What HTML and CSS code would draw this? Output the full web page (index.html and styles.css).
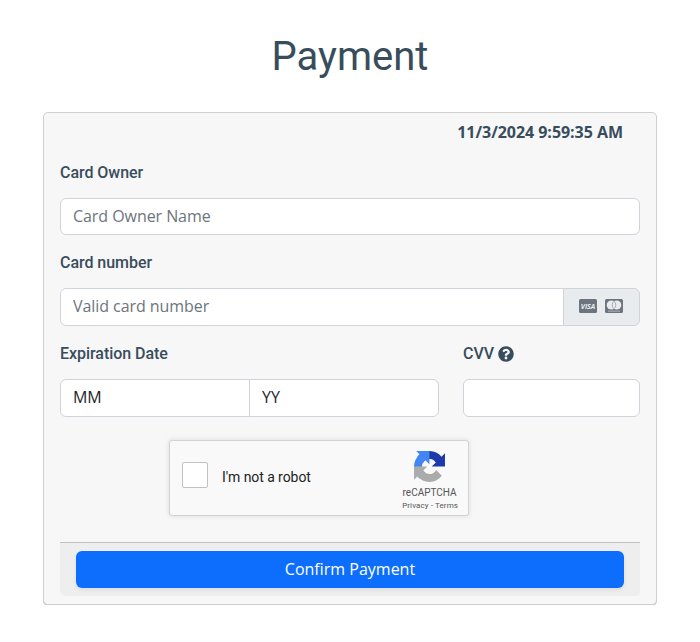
FILE: index.html
```html
<!DOCTYPE html>
<html lang="en">
<head>
<meta charset="utf-8">
<title>Payment</title>
<link rel="stylesheet" href="styles.css">
</head>
<body>
<main class="page">
  <h1 class="title">Payment</h1>
  <form class="card">
    <div class="timestamp">11/3/2024 9:59:35 AM</div>
    <div class="field owner">
      <label class="label" for="owner">Card Owner</label>
      <input class="control" id="owner" type="text" placeholder="Card Owner Name">
    </div>
    <div class="field">
      <label class="label" for="number">Card number</label>
      <div class="group">
        <input class="control" id="number" type="text" placeholder="Valid card number">
        <span class="addon">
          <svg class="brand" viewBox="0 0 18 14"><rect width="18" height="14" rx="1.5" fill="#6c757d"/><text x="9" y="9.7" text-anchor="middle" class="visa">VISA</text></svg>
          <svg class="brand" viewBox="0 0 18 14"><rect width="18" height="14" rx="1.5" fill="#6c757d"/><circle cx="6.3" cy="6" r="4.6" fill="#e9ecef"/><circle cx="11.7" cy="6" r="4.6" fill="#e9ecef"/><path d="M9 2.3a4.6 4.6 0 0 1 0 7.4a4.6 4.6 0 0 1 0-7.4z" fill="#e9ecef" stroke="#6c757d" stroke-width=".5"/><path d="M3 12.2h12" stroke="#b5babf" stroke-width=".9"/></svg>
        </span>
      </div>
    </div>
    <div class="row">
      <div class="field expiry">
        <label class="label" for="month">Expiration Date</label>
        <div class="group">
          <input class="control" id="month" type="text" value="MM">
          <input class="control" type="text" value="YY" aria-label="Year">
        </div>
      </div>
      <div class="field cvv">
        <label class="label" for="cvv">CVV
          <svg class="help" viewBox="0 0 512 512"><path fill="currentColor" d="M504 256c0 136.997-111.043 248-248 248S8 392.997 8 256C8 119.083 119.043 8 256 8s248 111.083 248 248zM262.655 90c-54.497 0-89.255 22.957-116.549 63.758-3.536 5.286-2.353 12.415 2.715 16.258l34.699 26.31c5.205 3.947 12.621 3.008 16.665-2.122 17.864-22.658 30.113-35.797 57.303-35.797 20.429 0 45.698 13.148 45.698 32.958 0 14.976-12.363 22.667-32.534 33.976C247.128 238.528 216 254.941 216 296v4c0 6.627 5.373 12 12 12h56c6.627 0 12-5.373 12-12v-1.333c0-28.462 83.186-29.647 83.186-106.667 0-58.002-60.165-102-116.531-102zM256 338c-25.365 0-46 20.635-46 46 0 25.364 20.635 46 46 46s46-20.636 46-46c0-25.364-20.635-46-46-46z"/></svg>
        </label>
        <input class="control" id="cvv" type="text">
      </div>
    </div>
    <div class="captcha">
      <span class="check"></span>
      <span class="robot">I'm not a robot</span>
      <div class="captcha-brand">
        <svg class="captcha-logo" viewBox="0 0 64 64"><path d="M64 31.955l-.033-1.37V4.687l-7.16 7.16C50.948 4.674 42.033.093 32.05.093c-10.4 0-19.622 4.96-25.458 12.64l11.736 11.86a15.55 15.55 0 0 1 4.754-5.334c2.05-1.6 4.952-2.906 8.968-2.906.485 0 .86.057 1.135.163 4.976.393 9.288 3.14 11.828 7.124l-8.307 8.307L64 31.953" fill="#1c3aa9"/><path d="M31.862.094l-1.37.033H4.594l7.16 7.16C4.58 13.147 0 22.06 0 32.046c0 10.4 4.96 19.622 12.64 25.458L24.5 45.768a15.55 15.55 0 0 1-5.334-4.754c-1.6-2.05-2.906-4.952-2.906-8.968 0-.485.057-.86.163-1.135.393-4.976 3.14-9.288 7.124-11.828l8.307 8.307L31.86.095" fill="#4285f4"/><path d="M.001 32.045l.033 1.37v25.898l7.16-7.16c5.86 7.173 14.774 11.754 24.76 11.754 10.4 0 19.622-4.96 25.458-12.64l-11.736-11.86a15.55 15.55 0 0 1-4.754 5.334c-2.05 1.6-4.952 2.906-8.968 2.906-.485 0-.86-.057-1.135-.163-4.976-.393-9.288-3.14-11.828-7.124l8.307-8.307c-10.522.04-22.4.066-27.295-.005" fill="#ababab"/></svg>
        <div class="captcha-name">reCAPTCHA</div>
        <div class="captcha-links">Privacy - Terms</div>
      </div>
    </div>
    <div class="footer">
      <button class="submit" type="button">Confirm Payment</button>
    </div>
  </form>
</main>
</body>
</html>
```
FILE: styles.css
```css
* { box-sizing: border-box; }
body {
  margin: 0;
  background: #fff;
  color: #384d5c;
  font: 16px/24px "Open Sans", sans-serif;
}
.page { padding: 33px 43px 0; }
.title {
  margin: 0 0 31px;
  font: 400 40px/48px Roboto, sans-serif;
  text-align: center;
}
.card {
  height: 493px;
  padding: 8px 16px 0;
  background: #f7f7f7;
  border: 1px solid #cfcfcf;
  border-radius: 5px;
  box-shadow: 0 1px 0 #cfcfcf;
}
.timestamp {
  padding-right: 17px;
  margin-bottom: 17px;
  font-weight: 700;
  line-height: 23px;
  letter-spacing: -.04px;
  text-align: right;
}
.field { margin-bottom: 16px; }
.label {
  display: flex;
  align-items: center;
  gap: 4px;
  height: 24px;
  margin-bottom: 13px;
  font: 500 16px/24px Roboto, sans-serif;
  letter-spacing: -.04px;
}
.control {
  display: block;
  width: 100%;
  height: 38px;
  padding: 0 12px 2px;
  border: 1px solid #ced4da;
  border-radius: 6px;
  background: #fff;
  color: #212529;
  font: 16px/24px "Open Sans", sans-serif;
  letter-spacing: -.06px;
}
.owner .control { height: 37px; padding-bottom: 1px; }
.control::placeholder { color: #6c757d; opacity: 1; }
.group { display: flex; }
.group .control { flex: 1; min-width: 0; }
.group > :not(:last-child) { border-top-right-radius: 0; border-bottom-right-radius: 0; }
.group > :not(:first-child) {
  margin-left: -1px;
  border-top-left-radius: 0;
  border-bottom-left-radius: 0;
}
.addon {
  display: flex;
  align-items: center;
  justify-content: center;
  gap: 8px;
  width: 77px;
  padding: 0 1px 2px 0;
  border: 1px solid #ced4da;
  border-radius: 6px;
  background: #e9ecef;
}
.brand { width: 18px; height: 14px; }
.visa { font: italic 700 7px "Open Sans", sans-serif; fill: #e9ecef; }
.row { display: flex; gap: 24px; }
.expiry { width: 379px; }
.cvv { flex: 1; }
.help { width: 16px; height: 16px; }
.captcha {
  display: flex;
  align-items: center;
  width: 300px;
  height: 76px;
  margin: 7px 0 26px 109px;
  padding: 0 10px 0 12px;
  background: #f9f9f9;
  border: 1px solid #d3d3d3;
  border-radius: 3px;
  box-shadow: 0 0 4px 1px rgba(0, 0, 0, .08);
  color: #222;
  font-family: Roboto, sans-serif;
}
.check {
  width: 26px;
  height: 26px;
  margin-bottom: 6px;
  background: #fff;
  border: 1px solid #c1c1c1;
  border-radius: 2px;
}
.robot { margin: 0 0 2px 14px; font-size: 14px; line-height: 17px; letter-spacing: -.06px; }
.captcha-brand { margin-left: auto; color: #555; text-align: center; }
.captcha-logo { display: block; width: 31px; height: 31px; margin: 6px auto 4px 12px; }
.captcha-name { padding-right: 1px; font-size: 10px; line-height: 14px; }
.captcha-links { font-size: 8px; line-height: 11px; letter-spacing: .1px; }
.footer {
  height: 54px;
  padding: 8px 16px;
  background: #eee;
  border-top: 1px solid #c3c3c3;
  border-radius: 0 0 5px 5px;
}
.submit {
  display: block;
  width: 100%;
  height: 37px;
  padding: 0 0 2px;
  border: 0;
  border-radius: 6px;
  background: #0d6efd;
  box-shadow: 0 2px 4px rgba(0, 0, 0, .07);
  color: #fff;
  font: 16px/24px "Open Sans", sans-serif;
}
```
